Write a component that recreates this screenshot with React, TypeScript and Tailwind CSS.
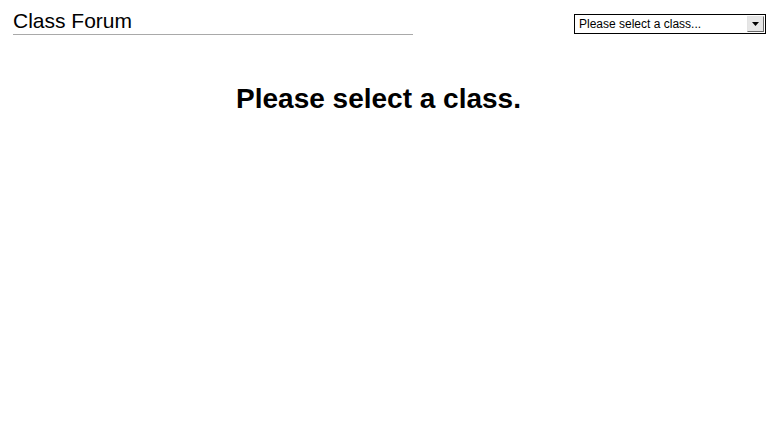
export default function App() {
  return (
    <div className="min-h-[422px] bg-white text-black" style={{ fontFamily: '"Liberation Sans", Arial, sans-serif' }}>
      <div className="flex items-start justify-between pl-[13px] pr-[17px] pt-[14px]">
        <div className="w-[400px] border-b border-[#a9a9a9]">
          <h1 className="mt-[-6px] text-[21px] leading-[26px]">Class Forum</h1>
        </div>
        <div className="flex h-[20px] w-[192px] items-stretch border border-black bg-white py-px pl-[4px] pr-px">
          <span className="flex-1 self-center text-[12px] leading-[14px]">Please select a class...</span>
          <div className="flex w-[17px] items-center justify-center border border-b-[#696969] border-l-[#e3e3e3] border-r-[#696969] border-t-[#e3e3e3] bg-[#e6e6e6]">
            <svg width="7" height="4" viewBox="0 0 7 4">
              <path d="M0 0h7L3.5 4z" fill="#000" />
            </svg>
          </div>
        </div>
      </div>
      <h2 className="mt-[48px] pr-[26px] text-center text-[28px] font-bold leading-[32px]">Please select a class.</h2>
    </div>
  )
}
